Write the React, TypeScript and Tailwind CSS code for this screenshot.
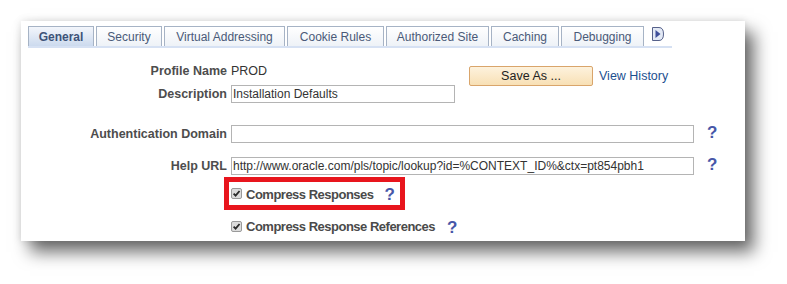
import type { ReactNode } from "react";

const TABS = [
  { label: "General", w: "w-[66px]", active: true },
  { label: "Security", w: "w-[66px]" },
  { label: "Virtual Addressing", w: "w-[121px]" },
  { label: "Cookie Rules", w: "w-[97px]" },
  { label: "Authorized Site", w: "w-[103px]" },
  { label: "Caching", w: "w-[68px]" },
  { label: "Debugging", w: "w-[83px]" },
];

function Help({ className = "" }: { className?: string }) {
  return (
    <span
      className={`text-[17px] font-bold leading-none text-[#4757a8] ${className}`}
    >
      ?
    </span>
  );
}

function Checked() {
  return (
    <span className="flex h-[11px] w-[11px] items-center justify-center rounded-[2px] border border-[#9a9a9a] bg-[#dcdcdc]">
      <svg viewBox="0 0 10 10" className="h-[9px] w-[9px]">
        <path
          d="M1.8 5.2 L4 7.4 L8.4 2.2"
          fill="none"
          stroke="#2a2a2a"
          strokeWidth="2"
        />
      </svg>
    </span>
  );
}

function Row({ label, children }: { label: string; children: ReactNode }) {
  return (
    <div className="flex h-[18px] items-center">
      <div className="w-[199px] text-right text-[12.5px] font-bold leading-[16px] text-[#4d4d4d]">
        {label}
      </div>
      <div className="ml-[4px] flex items-center">{children}</div>
    </div>
  );
}

function Field({ value = "", w }: { value?: string; w: string }) {
  return (
    <div
      className={`flex h-[18px] items-center border border-[#b4b4b4] bg-white pl-[1px] text-[12px] leading-[16px] text-[#333] ${w}`}
    >
      {value}
    </div>
  );
}

export default function App() {
  return (
    <div className="h-[284px] w-[787px] bg-white pl-[21px] pt-[21px] font-['Liberation_Sans',Arial,sans-serif]">
      <div className="h-[220px] w-[724px] bg-white pl-[7px] pt-[5px] shadow-[0_0_8px_rgba(0,0,0,0.12),9px_11px_16px_rgba(0,0,0,0.58)]">
        {/* tab strip */}
        <div className="w-[644px] border-b-2 border-[#d6e1f3]">
          <div className="flex h-[20px] items-end gap-[2px]">
            {TABS.map((t) => (
              <div
                key={t.label}
                className={`flex h-[20px] items-center justify-center border border-b-0 border-[#a6b3c5] text-[12px] ${t.w} ${
                  t.active
                    ? "bg-gradient-to-b from-[#f3f6fb] to-[#ccdaee] font-bold text-[#3d5278]"
                    : "bg-gradient-to-b from-white to-[#eef2f7] text-[#4a5a78]"
                }`}
              >
                {t.label}
              </div>
            ))}
            <div className="mb-[6px] ml-[6px] self-start pt-[1px]">
              <svg viewBox="0 0 12 14" className="h-[14px] w-[12px]">
                <path
                  d="M0.5 0.5 H7 Q11.5 0.5 11.5 7 Q11.5 13.5 7 13.5 H0.5 Z"
                  fill="#e3e9f5"
                  stroke="#56618a"
                />
                <path d="M3.5 3 L8.5 7 L3.5 11 Z" fill="#3f4f9a" />
              </svg>
            </div>
          </div>
        </div>

        {/* profile + description */}
        <div className="mt-[14px] flex items-start">
          <div className="flex flex-col gap-[5px]">
            <Row label="Profile Name">
              <span className="flex h-[18px] items-center text-[12.5px] leading-[16px] text-[#333]">
                PROD
              </span>
            </Row>
            <Row label="Description">
              <Field value="Installation Defaults" w="w-[224px]" />
            </Row>
          </div>
          <button
            type="button"
            className="ml-[14px] mt-[4px] h-[20px] w-[124px] rounded-[2px] border border-[#d9a56b] bg-gradient-to-b from-[#fdf2dd] to-[#f8e0b5] text-[12.5px] leading-[16px] text-[#222]"
          >
            Save As ...
          </button>
          <span className="ml-[6px] mt-[6px] text-[12.5px] leading-[16px] text-[#1c4f8f]">
            View History
          </span>
        </div>

        {/* domain + help url */}
        <div className="mt-[22px] flex flex-col gap-[14px]">
          <Row label="Authentication Domain">
            <Field w="w-[463px]" />
            <Help className="-mt-[4px] ml-[13px]" />
          </Row>
          <Row label="Help URL">
            <Field
              value="http://www.oracle.com/pls/topic/lookup?id=%CONTEXT_ID%&ctx=pt854pbh1"
              w="w-[463px]"
            />
            <Help className="-mt-[4px] ml-[13px]" />
          </Row>
        </div>

        {/* checkboxes */}
        <div className="ml-[196px] mt-[2px] flex h-[33px] w-[181px] items-center border-[5px] border-[#e8151d] pl-[2px]">
          <Checked />
          <span className="ml-[4px] mt-[2px] text-[13px] font-bold leading-[16px] tracking-[-0.5px] text-[#4a4a4a]">
            Compress Responses
          </span>
          <Help className="ml-[11px] mt-[2px]" />
        </div>
        <div className="ml-[203px] mt-[5px] flex h-[22px] items-center">
          <Checked />
          <span className="ml-[4px] mt-[2px] text-[13px] font-bold leading-[16px] tracking-[-0.5px] text-[#4a4a4a]">
            Compress Response References
          </span>
          <Help className="ml-[12px] mt-[2px]" />
        </div>
      </div>
    </div>
  );
}
